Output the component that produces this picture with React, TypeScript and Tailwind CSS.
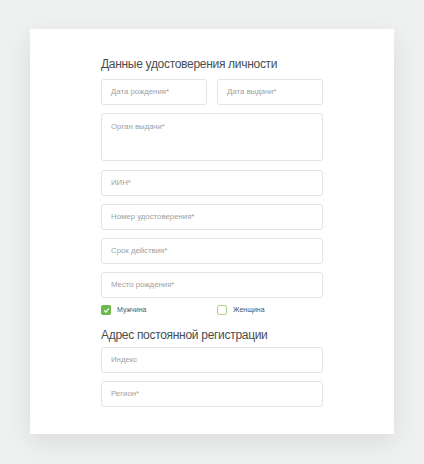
import React from "react";

const font = { fontFamily: '"Liberation Sans", Arial, sans-serif' };

function Field({ label, className = "" }: { label: string; className?: string }) {
  return (
    <div
      className={`flex h-[26px] items-center rounded-[3px] border border-[#e2e4e4] bg-white px-[9px] text-[7.8px] text-[#a0a0a0] ${className}`}
    >
      {label}
    </div>
  );
}

export default function App() {
  return (
    <div className="min-h-[464px] w-[424px] bg-[#eff0f0] pt-[29px]" style={font}>
      <div className="mx-[30px] h-[405px] w-[364px] bg-white pt-[28px] pl-[71px] pr-[71px] shadow-[0_8px_24px_rgba(0,0,0,0.09)]">
        <div className="flex flex-col">
          <h2 className="h-[14px] text-[12px] leading-[14px] tracking-[-0.3px] text-[#4a4d4f]">
            Данные удостоверения личности
          </h2>
          <div className="mt-[8px] flex gap-[10px]">
            <Field label="Дата рождения*" className="flex-1" />
            <Field label="Дата выдачи*" className="flex-1" />
          </div>
          <div className="mt-[8px] h-[48px] rounded-[3px] border border-[#e2e4e4] px-[9px] pt-[8px] text-[7.8px] leading-[10px] text-[#a0a0a0]">
            Орган выдачи*
          </div>
          <Field label="ИИН*" className="mt-[9px]" />
          <Field label="Номер удостоверения*" className="mt-[8px]" />
          <Field label="Срок действия*" className="mt-[8px]" />
          <Field label="Место рождения*" className="mt-[8px]" />
          <div className="mt-[7px] flex h-[10px] items-center">
            <div className="flex w-[116px] items-center">
              <div className="flex h-[10px] w-[10px] items-center justify-center rounded-[2px] bg-[#6cb84a]">
                <svg width="7" height="7" viewBox="0 0 10 10" fill="none">
                  <path d="M2 5.2 L4.2 7.3 L8 2.8" stroke="white" strokeWidth="1.8" strokeLinecap="round" strokeLinejoin="round" />
                </svg>
              </div>
              <span className="ml-[6px] text-[7px] text-[#555]">Мужчина</span>
            </div>
            <div className="flex items-center">
              <div className="h-[10px] w-[10px] rounded-[2px] border border-[#a9d58c] bg-white" />
              <span className="ml-[6px] text-[7px] text-[#555]">Женщина</span>
            </div>
          </div>
          <h2 className="mt-[13px] h-[14px] text-[12px] leading-[14px] tracking-[-0.3px] text-[#4a4d4f]">
            Адрес постоянной регистрации
          </h2>
          <Field label="Индекс" className="mt-[5px]" />
          <Field label="Регион*" className="mt-[8px]" />
        </div>
      </div>
    </div>
  );
}
